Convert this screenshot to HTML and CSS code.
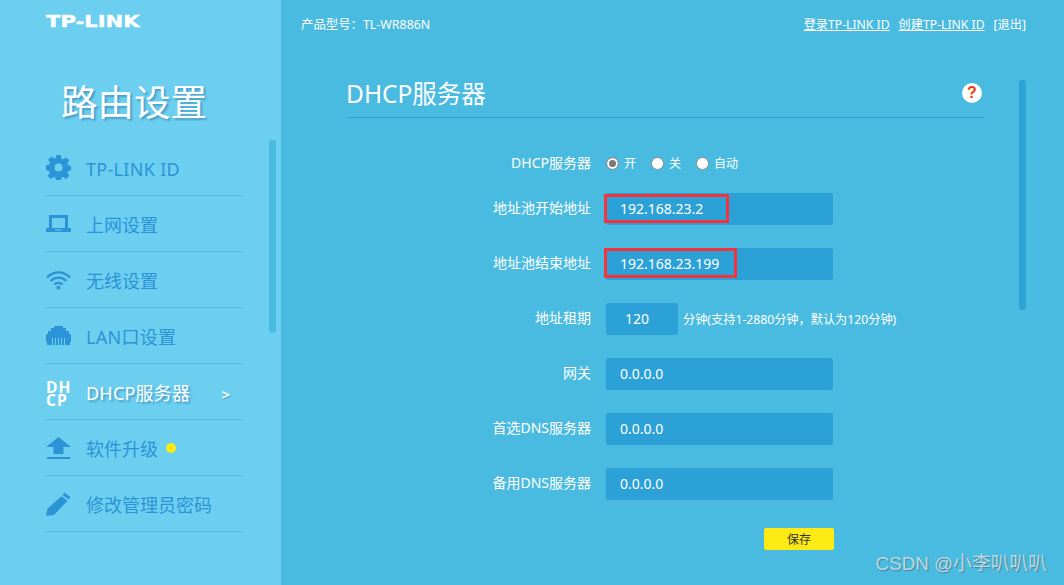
FILE: index.html
```html
<!DOCTYPE html>
<html lang="zh-CN">
<head>
<meta charset="utf-8">
<title>DHCP服务器</title>
<link rel="stylesheet" href="styles.css">
</head>
<body>
<div class="page">
  <aside class="side">
    <div class="logo"><span class="logo-text">TP-LINK</span></div>
    <div class="side-title">路由设置</div>
    <div class="thumb side-thumb"></div>
    <nav class="nav">
      <a class="nav-item">
        <span class="nav-icon"><svg width="25" height="25" viewBox="0 0 25 25"><path fill="#2a94d6" fill-rule="evenodd" d="M10.2 0h4.6l.6 3.4 1.9.8 2.9-2 3.2 3.2-2 2.9.8 1.9 3.3.6v4.6l-3.3.6-.8 1.9 2 2.9-3.2 3.2-2.9-2-1.9.8-.6 3.2h-4.6l-.6-3.2-1.9-.8-2.9 2-3.2-3.2 2-2.9-.8-1.9L0 14.8v-4.6l3.2-.6.8-1.9-2-2.9 3.2-3.2 2.9 2 1.9-.8zM12.500 8.500a4 4 0 1 0 0 8 4 4 0 0 0 0-8z"/></svg></span>
        <span class="nav-text nav-latin">TP-LINK ID</span>
      </a>
      <a class="nav-item">
        <span class="nav-icon"><svg width="25" height="17" viewBox="0 0 25 17"><path fill="#2a94d6" fill-rule="evenodd" d="M3 0h19v13h3v4H0v-4h3zM6 3v10h13V3zM9 14.500v1h7v-1z"/></svg></span>
        <span class="nav-text">上网设置</span>
      </a>
      <a class="nav-item">
        <span class="nav-icon"><svg width="25" height="20" viewBox="0 0 25 20"><g fill="none" stroke="#2a94d6" stroke-width="2.400"><path d="M1 7.500C7.500 .6 17.500 .6 24 7.500"/><path d="M4.800 11C9 6.500 16 6.500 20.200 11"/><path d="M8.500 14.500C10.700 12.300 14.300 12.300 16.500 14.500"/></g><circle cx="12.500" cy="17.500" r="2" fill="#2a94d6"/></svg></span>
        <span class="nav-text">无线设置</span>
      </a>
      <a class="nav-item">
        <span class="nav-icon"><svg width="25" height="19" viewBox="0 0 25 19"><path fill="#2a94d6" d="M8 0h9v2h3v3h3v3h2v8h-1v3H1v-3H0V8h2V5h3V2h3z"/><path stroke="#6dcff0" stroke-width="1" d="M6.500 12v7M9.500 12v7M12.500 12v7M15.500 12v7M18.500 12v7"/></svg></span>
        <span class="nav-text nav-latin">LAN口设置</span>
      </a>
      <a class="nav-item active">
        <span class="nav-icon dhcp-icon"><span>DH</span><span>CP</span></span>
        <span class="nav-text">DHCP服务器</span>
        <span class="nav-arrow">&gt;</span>
      </a>
      <a class="nav-item">
        <span class="nav-icon"><svg width="25" height="22" viewBox="0 0 25 22"><path fill="#2a94d6" d="M12.500 0L25 10h-7.500v7h-10v-7H0z"/><rect x="1" y="20" width="23" height="2" fill="#2a94d6"/></svg></span>
        <span class="nav-text">软件升级</span>
        <span class="dot"></span>
      </a>
      <a class="nav-item">
        <span class="nav-icon"><svg width="25" height="24" viewBox="0 0 25 24"><path fill="#2a94d6" d="M18.500 0.500L24.500 5 22.500 7.500 16.500 3zM15.500 4.200L21.500 8.700 8 23 0 24 1.500 16.500z"/></svg></span>
        <span class="nav-text">修改管理员密码</span>
      </a>
    </nav>
  </aside>

  <main class="main">
    <header class="topbar">
      <span>产品型号：TL-WR886N</span>
      <span class="account">
        <a class="link">登录TP-LINK ID</a>
        <a class="link">创建TP-LINK ID</a>
        <a>[退出]</a>
      </span>
    </header>
    <div class="thumb main-thumb"></div>
    <section class="panel">
      <div class="panel-head">
        <h1 class="panel-title">DHCP服务器</h1>
        <span class="help">?</span>
      </div>
      <form class="form">
        <div class="row row-radio">
          <span class="label">DHCP服务器</span>
          <span class="radios">
            <span class="radio-item"><span class="radio checked"></span>开</span>
            <span class="radio-item"><span class="radio"></span>关</span>
            <span class="radio-item"><span class="radio"></span>自动</span>
          </span>
        </div>
        <div class="row">
          <span class="label">地址池开始地址</span>
          <span class="field">192.168.23.2<span class="mark mark-a"></span></span>
        </div>
        <div class="row">
          <span class="label">地址池结束地址</span>
          <span class="field">192.168.23.199<span class="mark mark-b"></span></span>
        </div>
        <div class="row">
          <span class="label">地址租期</span>
          <span class="field field-short">120</span>
          <span class="hint">分钟(支持1-2880分钟，默认为120分钟)</span>
        </div>
        <div class="row">
          <span class="label">网关</span>
          <span class="field">0.0.0.0</span>
        </div>
        <div class="row">
          <span class="label">首选DNS服务器</span>
          <span class="field">0.0.0.0</span>
        </div>
        <div class="row">
          <span class="label">备用DNS服务器</span>
          <span class="field">0.0.0.0</span>
        </div>
        <div class="actions"><span class="save">保存</span></div>
      </form>
    </section>
  </main>
</div>
<div class="watermark">CSDN @小李叭叭叭</div>
</body>
</html>
```
FILE: styles.css
```css
* { box-sizing: border-box; }
html, body { margin: 0; height: 100%; overflow: hidden; }
body {
  font-family: "Noto Sans", "Noto Sans CJK SC", sans-serif;
  color: #fff;
  background: #4abbe0;
  position: relative;
}
.page { display: flex; height: 585px; }

/* sidebar */
.side {
  position: relative;
  width: 281px;
  flex: none;
  background: #6dcff0;
  padding-left: 46px;
}
.logo { height: 44px; padding-top: 12px; }
.logo-text {
  display: block;
  font: 700 16.500px/20px "DejaVu Sans", sans-serif;
  -webkit-text-stroke: .4px #fff;
  transform: scaleX(1.280);
  transform-origin: left center;
}
.side-title {
  margin: 33px 0 0 15px;
  height: 63px;
  font-size: 36.500px;
  line-height: 50px;
  white-space: nowrap;
  text-shadow: 2px 2px 2px rgba(40, 120, 170, .55);
}
.nav { width: 196px; }
.nav-item {
  display: flex;
  align-items: center;
  height: 56px;
  border-bottom: 1px solid #4fb6dc;
  color: #2a94d6;
  font-size: 18px;
}
.nav-icon { width: 40px; flex: none; display: flex; align-items: center; }
.nav-text { white-space: nowrap; line-height: 28px; padding-top: 2px; }
.nav-latin { letter-spacing: .3px; }
.active { color: #fff; }
.active .nav-text { text-shadow: 2px 2px 2px rgba(40, 120, 170, .55); letter-spacing: .2px; }
.dhcp-icon {
  flex-direction: column;
  align-items: flex-start;
  margin-top: 4px;
  font: 700 15.500px/13px "Open Sans", sans-serif;
  letter-spacing: 1px;
  color: #fff;
}
.nav-arrow {
  margin-left: auto;
  margin-right: 12px;
  margin-top: 5px;
  font-size: 15px;
  font-weight: 700;
  text-shadow: 1px 1px 1px rgba(40, 120, 170, .55);
}
.dot {
  width: 10px;
  height: 10px;
  margin-left: 8px;
  border-radius: 50%;
  background: #fdea14;
}
.thumb { position: absolute; width: 7px; border-radius: 3px; }
.side-thumb { left: 269px; top: 140px; height: 193px; background: #4abbe0; }
.main-thumb { left: 738px; top: 80px; height: 230px; background: #2ea3d8; }

/* main */
.main { position: relative; flex: 1; min-width: 0; }
.topbar {
  display: flex;
  justify-content: space-between;
  align-items: center;
  height: 47px;
  padding: 0 38px 0 20px;
  font-size: 12.400px;
}
.account { display: flex; gap: 9px; font-size: 12.200px; }
.link { text-decoration: underline; }
.panel { width: 637px; margin: 23px 0 0 66px; }
.panel-head {
  display: flex;
  justify-content: space-between;
  align-items: center;
  height: 48px;
  border-bottom: 1px solid #2d9fd6;
  padding-right: 2px;
}
.panel-title { margin: 0 0 0 -1px; font-size: 24.500px; font-weight: 400; line-height: 46px; }
.help {
  width: 20px;
  height: 20px;
  margin-top: -1px;
  border-radius: 50%;
  background: #fff;
  color: #f03a10;
  font: 700 16px/20px "Liberation Sans", sans-serif;
  text-align: center;
}
.form { padding-top: 30px; font-size: 14px; }
.row {
  display: flex;
  align-items: center;
  height: 32px;
  margin-bottom: 23px;
}
.row-radio { height: 30px; margin-bottom: 15px; }
.label {
  width: 244px;
  margin-right: 15px;
  margin-top: -4px;
  text-align: right;
  white-space: nowrap;
}
.row-radio .label { margin-top: -2px; }
.radios { display: flex; font-size: 12px; }
.radio-item { display: flex; align-items: center; gap: 5px; width: 45px; }
.radio {
  width: 13px;
  height: 13px;
  border-radius: 50%;
  background: #fff;
  border: 1px solid #8a8f92;
}
.radio.checked { background: #777; box-shadow: inset 0 0 0 2px #fff; }
.field {
  position: relative;
  display: block;
  width: 227px;
  height: 32px;
  padding-left: 14px;
  border-radius: 2px;
  background: #2ba1d8;
  font-size: 14px;
  line-height: 31px;
}
.field-short { width: 72px; padding-left: 19px; }
.hint { margin-left: 5px; font-size: 12.200px; white-space: nowrap; }
.mark { position: absolute; left: -2px; border: 3px solid #f5333a; }
.mark-a { top: 1px; width: 125px; height: 29px; }
.mark-b { top: 0; width: 133px; height: 30px; }
.actions { padding-left: 417px; margin-top: 28px; }
.save {
  display: block;
  width: 70px;
  height: 22px;
  border-radius: 2px;
  background: #fdea14;
  color: #333;
  font-size: 12px;
  line-height: 23px;
  text-align: center;
}
.watermark {
  position: absolute;
  right: 17px;
  bottom: 9px;
  color: #b9dbe6;
  font: 18.800px/24px "Liberation Sans", "Noto Sans CJK SC", sans-serif;
  text-shadow: 1px 1px 1px #4d7f93;
}
```
